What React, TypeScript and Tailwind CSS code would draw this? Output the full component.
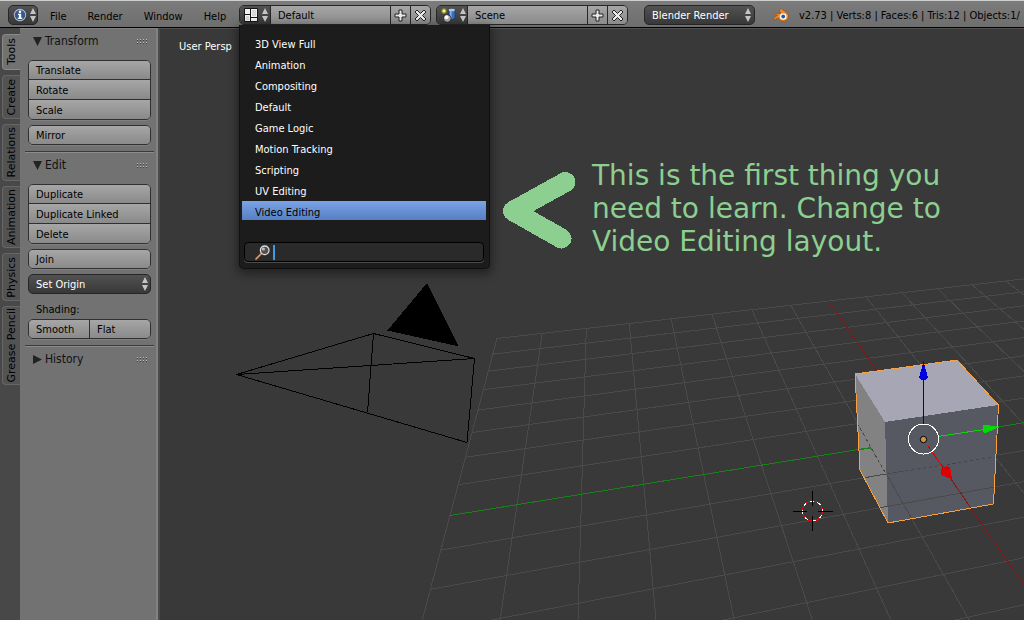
import { useState, type ReactNode } from "react";

const LAYOUTS = [
  "3D View Full",
  "Animation",
  "Compositing",
  "Default",
  "Game Logic",
  "Motion Tracking",
  "Scripting",
  "UV Editing",
  "Video Editing",
];

const TABS = [
  { name: "Tools", height: "h-[36px]" },
  { name: "Create", height: "h-[44px]" },
  { name: "Relations", height: "h-[57px]" },
  { name: "Animation", height: "h-[62px]" },
  { name: "Physics", height: "h-[48px]" },
  { name: "Grease Pencil", height: "h-[79px]" },
];

const LIGHT = "bg-linear-to-b from-[#a6a6a6] to-[#8a8a8a] text-black";
const DARK = "bg-linear-to-b from-[#525252] to-[#383838] text-white";

type Point = [number, number];

/* Ground plane: (u, v) run from 0 to 16, with the world origin at (8, 8). */
function project(u: number, v: number): Point {
  const s = u / 8;
  const t = v / 8;
  const w = 1 + 0.10495 * s - 0.32048 * t;
  return [(497 + 418.67 * s - 191.22 * t) / w, (338.5 - 5.91 * s + 11.79 * t) / w];
}

function Segment({ from, to, stroke }: { from: Point; to: Point; stroke: string }) {
  return <line x1={from[0]} y1={from[1]} x2={to[0]} y2={to[1]} stroke={stroke} />;
}

function GroundLines() {
  const steps = Array.from({ length: 17 }, (_, i) => i).filter((i) => i !== 8);
  return (
    <g>
      {steps.map((i) => (
        <Segment key={`u${i}`} from={project(i, 0)} to={project(i, 16)} stroke="#4a4a4a" />
      ))}
      {steps.map((i) => (
        <Segment key={`v${i}`} from={project(0, i)} to={project(16, i)} stroke="#4a4a4a" />
      ))}
      <Segment from={project(0, 8)} to={project(16, 8)} stroke="#178217" />
      <Segment from={project(8, 0)} to={project(8, 16)} stroke="#821717" />
    </g>
  );
}

function Scene() {
  return (
    <svg
      className="absolute inset-0 h-full w-full"
      viewBox="160 29 864 591"
      preserveAspectRatio="xMinYMin slice"
      shapeRendering="crispEdges"
      fill="none"
      aria-hidden="true"
    >
      <defs>
        <clipPath id="in-front">
          <path d="M857 423L886 474L997 457V530H857Z" />
        </clipPath>
      </defs>
      <GroundLines />

      <path d="M427 283L387.500 330.500L459 346.500Z" fill="#000" />
      <path
        d="M236.500 374.500L373.500 333.500L474.500 358.500L467 442.500L236.500 374.500L474.500 358.500M373.500 333.500L367.500 412.500"
        stroke="#000"
      />

      <path d="M855 374L957 360L998 405L885 422Z" fill="#a7a6b5" />
      <path d="M855 374L885 422L888 523L860 470Z" fill="#828282" />
      <path d="M885 422L998 405L993 504L888 523Z" fill="#575962" />
      <path d="M860 449.500L871 448" stroke="#178217" />
      <path d="M857 423L886 474L995 457" stroke="#454648" strokeDasharray="3 3" />
      <g clipPath="url(#in-front)">
        <GroundLines />
      </g>
      <path
        d="M855 374L957 360L998.500 405L993.500 504L888 523L860 470Z"
        stroke="#f9a03c"
        strokeLinejoin="round"
      />

      <path d="M923.500 425V376" stroke="#0000a8" />
      <path d="M923.500 361L928 378Q923.500 382 919 378Z" fill="#0000dc" />
      <path d="M938 436.500L984 429.500" stroke="#00dc00" />
      <path d="M1000 427L983 424.500Q982 430 984.500 433.500Z" fill="#00dc00" />
      <path d="M928 446L942 466" stroke="#dc0000" />
      <path d="M952 479.500L950 467Q945 465 941 469L941 475Z" fill="#dc0000" />
      <circle cx="923.500" cy="439" r="15" stroke="#fff" />
      <circle
        cx="923.500"
        cy="439.500"
        r="3.200"
        fill="#d0924a"
        stroke="#000"
        shapeRendering="geometricPrecision"
      />

      <circle cx="812.500" cy="511" r="10" stroke="#fff" />
      <circle cx="812.500" cy="511" r="10" stroke="#f00" strokeDasharray="4 4" />
      <path d="M793 511.500H807M818 511.500H833M812.500 491V506M812.500 516V531" stroke="#000" />

      <path
        d="M565.500 182L513 211L561.500 238.500"
        stroke="#8ccf90"
        strokeWidth="20"
        strokeLinecap="round"
        strokeLinejoin="round"
      />
    </svg>
  );
}

function Arrows() {
  return (
    <svg viewBox="0 0 6 14" className="h-[14px] w-[6px] shrink-0" fill="#c4c4c4" aria-hidden="true">
      <path d="M3 0L6 6H0ZM0 8H6L3 14Z" />
    </svg>
  );
}

function InfoIcon() {
  return (
    <svg viewBox="0 0 14 14" className="size-[14px]" aria-hidden="true">
      <circle cx="7" cy="7" r="6.400" fill="#d9e2ee" stroke="#1c2c46" strokeWidth=".6" />
      <circle cx="7" cy="7" r="5.300" fill="#35598f" />
      <circle cx="7" cy="3.700" r="1.300" fill="#fff" />
      <path d="M5 5.700H8.200V9.700H9.300V11H4.800V9.700H5.900V7H5Z" fill="#fff" />
    </svg>
  );
}

function LayoutIcon() {
  return (
    <svg viewBox="0 0 14 14" className="size-[14px]" aria-hidden="true">
      <rect width="14" height="14" rx="1" fill="#151515" />
      <path d="M1 1H6V6H1ZM1 7H6V13H1ZM7 1H13V9H7ZM7 10H13V13H7Z" fill="#f2f2f2" />
      <path d="M2 8H5V12H2ZM8 2H12V8H8Z" fill="#d8d8d8" />
    </svg>
  );
}

function SceneIcon() {
  return (
    <svg viewBox="0 0 15 15" className="size-[15px]" aria-hidden="true">
      <circle cx="3" cy="3" r="3" fill="#77772c" />
      <circle cx="3" cy="3" r="1.700" fill="#f5f58a" />
      <path d="M7.500 2V10.500Q10.500 12.500 14 10.500V2Z" fill="#3a6fc0" stroke="#17305c" strokeWidth=".6" />
      <path d="M9 3V11H10.500V3Z" fill="#8db6ee" />
      <ellipse cx="10.750" cy="2" rx="3.200" ry="1.300" fill="#a9c9f5" />
      <circle cx="6.300" cy="10.500" r="3.800" fill="#aaa" stroke="#151515" strokeWidth=".7" />
      <circle cx="5.500" cy="9.300" r="2" fill="#fff" />
    </svg>
  );
}

function PlusIcon() {
  return (
    <svg viewBox="0 0 13 13" className="size-[13px]" aria-hidden="true">
      <path d="M5 1H8V5H12V8H8V12H5V8H1V5H5Z" fill="#e8e8e8" stroke="#222" />
    </svg>
  );
}

function CloseIcon() {
  return (
    <svg viewBox="0 0 13 13" className="size-[13px]" aria-hidden="true">
      <path
        d="M3 1L6.500 4.500L10 1L12 3L8.500 6.500L12 10L10 12L6.500 8.500L3 12L1 10L4.500 6.500L1 3Z"
        fill="#e8e8e8"
        stroke="#222"
      />
    </svg>
  );
}

function BlenderIcon() {
  return (
    <svg viewBox="0 0 16 14" className="h-[14px] w-[16px] shrink-0" aria-hidden="true">
      <path
        d="M7.300 .9Q8 .3 8.800 .9L14.200 5.200Q16 7 15.500 9.300Q14.300 13.300 10.200 13.300Q6.300 13.200 5.200 9.700L2.200 11.600Q.7 12 .5 10.600L4.700 7H2Q1.200 6.200 2.200 5.400H8.200L6.600 3.500Q6.500 2 7.300 .9Z"
        fill="#ee8a27"
        stroke="#8a4508"
        strokeWidth=".5"
      />
      <circle cx="10.200" cy="8.500" r="3.300" fill="#fff" />
      <circle cx="10.200" cy="8.500" r="1.900" fill="#27579b" />
    </svg>
  );
}

function SearchIcon() {
  return (
    <svg viewBox="0 0 15 15" className="size-[15px] shrink-0" aria-hidden="true">
      <path d="M1 14L6.500 8.500" stroke="#6b3a1c" strokeWidth="2.600" strokeLinecap="round" />
      <path d="M1 14L6 9" stroke="#e0a070" strokeWidth="1.400" strokeLinecap="round" />
      <circle cx="9.700" cy="5.300" r="4.300" fill="#55504e" stroke="#ddd" strokeWidth="1.300" />
      <circle cx="8.400" cy="4" r="1.600" fill="#bbb" />
    </svg>
  );
}

function DataSelector({
  label,
  value,
  icon,
  onOpen,
  children,
}: {
  label: string;
  value: string;
  icon: ReactNode;
  onOpen?: () => void;
  children?: ReactNode;
}) {
  return (
    <div className="relative shrink-0">
      <div className="flex h-[20px] overflow-hidden rounded-[5px] border border-[#262626]">
        <button
          type="button"
          aria-label={`Browse ${label}`}
          onClick={onOpen}
          className={`flex w-[30px] items-center gap-[4px] pl-[4px] ${DARK}`}
        >
          {icon}
          <Arrows />
        </button>
        <input
          aria-label={label}
          defaultValue={value}
          className={`w-[120px] border-l border-[#262626] pl-[7px] pt-[2px] outline-none ${LIGHT}`}
        />
        <button
          type="button"
          aria-label={`Add ${label}`}
          className={`flex w-[20px] items-center justify-center border-l border-[#262626] ${LIGHT}`}
        >
          <PlusIcon />
        </button>
        <button
          type="button"
          aria-label={`Remove ${label}`}
          className={`flex w-[20px] items-center justify-center border-l border-[#262626] ${LIGHT}`}
        >
          <CloseIcon />
        </button>
      </div>
      {children}
    </div>
  );
}

function LayoutMenu() {
  return (
    <div className="absolute left-0 top-full z-20 w-[251px] rounded-b-[5px] border border-t-0 border-[#101010] bg-[#1c1c1c] pb-[6px] pl-[2px] pr-[3px] pt-[8px] shadow-[0_3px_10px_2px_rgba(0,0,0,0.4)]">
      <ul className="flex flex-col gap-[2px]">
        {LAYOUTS.map((name) => (
          <li key={name}>
            <button
              type="button"
              className={`flex h-[19px] w-full items-center pl-[13px] pt-[4px] ${
                name === "Video Editing"
                  ? "bg-linear-to-b from-[#7ba3e8] to-[#5680c2] text-black"
                  : "text-white"
              }`}
            >
              {name}
            </button>
          </li>
        ))}
      </ul>
      <label className="mx-[2px] mt-[22px] flex h-[20px] items-center gap-[3px] rounded-[4px] border border-black bg-[#2a2a2a] pl-[10px] shadow-[0_1px_0_#4a4a4a]">
        <SearchIcon />
        <span className="h-[15px] w-[2px] shrink-0 bg-[#3d9ae6]" />
        <input aria-label="Search layouts" className="min-w-0 flex-1 bg-transparent text-white outline-none" />
      </label>
    </div>
  );
}

function Header() {
  const [open, setOpen] = useState(true);
  return (
    <header className="relative z-10 flex shrink-0 items-start border-b border-t border-b-black border-t-[#cdd0cf] bg-linear-to-b from-[#7c7c7c] to-[#6e6e6e] pb-[2px] pl-[8px] pt-[4px]">
      <button
        type="button"
        aria-label="Editor type"
        className={`flex h-[20px] w-[30px] shrink-0 items-center gap-[3px] rounded-[5px] border border-[#262626] pl-[4px] ${DARK}`}
      >
        <InfoIcon />
        <Arrows />
      </button>
      <nav className="ml-[12px] flex h-[20px] w-[189px] shrink-0 items-center gap-[21px] pt-[3px]">
        <button type="button">File</button>
        <button type="button">Render</button>
        <button type="button">Window</button>
        <button type="button">Help</button>
      </nav>
      <div className="flex shrink-0 gap-[5px]">
        <DataSelector
          label="Screen layout"
          value="Default"
          icon={<LayoutIcon />}
          onOpen={() => setOpen(!open)}
        >
          {open && <LayoutMenu />}
        </DataSelector>
        <DataSelector label="Scene" value="Scene" icon={<SceneIcon />} />
      </div>
      <button
        type="button"
        className={`ml-[16px] flex h-[20px] w-[111px] shrink-0 items-center justify-between rounded-[5px] border border-[#262626] pl-[7px] pr-[3px] ${DARK}`}
      >
        <span className="pt-[2px]">Blender Render</span>
        <Arrows />
      </button>
      <div className="ml-[18px] flex h-[20px] min-w-0 flex-1 items-center gap-[10px] overflow-hidden whitespace-nowrap">
        <BlenderIcon />
        <span className="pt-[2px]">v2.73 | Verts:8 | Faces:6 | Tris:12 | Objects:1/</span>
      </div>
    </header>
  );
}

function TabStrip() {
  return (
    <div role="tablist" className="flex w-[20px] shrink-0 flex-col gap-[5px] bg-[#484848] pl-[2px] pt-[6px]">
      {TABS.map((tab, i) => (
        <button
          key={tab.name}
          type="button"
          role="tab"
          aria-selected={i === 0}
          className={`flex shrink-0 items-center justify-center rounded-l-[4px] border border-r-0 ${tab.height} ${
            i === 0 ? "border-[#8a8a8a] bg-[#727272]" : "border-[#666] bg-[#535353]"
          }`}
        >
          <span className="rotate-180 whitespace-nowrap font-['DejaVu_Sans',sans-serif] [writing-mode:vertical-rl]">
            {tab.name}
          </span>
        </button>
      ))}
    </div>
  );
}

function PanelTitle({ title, closed }: { title: string; closed?: boolean }) {
  return (
    <h2 className="flex h-[24px] items-center pl-[5px] pr-[3px] text-[12px] text-[#111]">
      <svg viewBox="0 0 9 9" className="mr-[3px] size-[9px]" fill="#222" aria-hidden="true">
        <path d={closed ? "M0 0L9 4.500L0 9Z" : "M0 0H9L4.500 9Z"} />
      </svg>
      {title}
      <svg viewBox="0 0 11 5" className="ml-auto h-[5px] w-[11px]" shapeRendering="crispEdges" aria-hidden="true">
        <path d="M0 .5H11M0 3.500H11" stroke="#c0c0c0" strokeDasharray="1 2" />
        <path d="M0 1.500H11M0 4.500H11" stroke="#404040" strokeDasharray="1 2" />
      </svg>
    </h2>
  );
}

function ButtonStack({ names }: { names: string[] }) {
  return (
    <div className="flex flex-col overflow-hidden rounded-[5px] border border-[#303030] shadow-[0_1px_0_#808080]">
      {names.map((name, i) => (
        <button
          key={name}
          type="button"
          className={`pl-[7px] pt-[2px] text-left ${LIGHT} ${
            i === 0 ? "h-[18px]" : "h-[20px] border-t border-[#303030]"
          }`}
        >
          {name}
        </button>
      ))}
    </div>
  );
}

function Divider() {
  return <hr className="-mx-[3px] border-b border-t border-b-[#8c8c8c] border-t-[#3a3a3a]" />;
}

function ToolShelf() {
  return (
    <aside className="flex w-[160px] shrink-0 border-r-2 border-r-[#4b4b4b]">
      <TabStrip />
      <div className="flex flex-1 flex-col border-r-2 border-t border-r-[#828282] border-t-[#828282] bg-[#727272] pl-[8px] pr-[5px]">
        <PanelTitle title="Transform" />
        <div className="mb-[6px] mt-[7px] flex flex-col gap-[5px]">
          <ButtonStack names={["Translate", "Rotate", "Scale"]} />
          <ButtonStack names={["Mirror"]} />
        </div>
        <Divider />
        <PanelTitle title="Edit" />
        <div className="mb-[6px] mt-[7px] flex flex-col gap-[5px]">
          <ButtonStack names={["Duplicate", "Duplicate Linked", "Delete"]} />
          <ButtonStack names={["Join"]} />
          <button
            type="button"
            className={`flex h-[20px] items-center justify-between rounded-[5px] border border-[#262626] pl-[7px] pr-[2px] ${DARK}`}
          >
            <span className="pt-[2px]">Set Origin</span>
            <Arrows />
          </button>
          <div>
            <div className="flex h-[20px] items-center pl-[8px] pt-[2px]">Shading:</div>
            <div className="flex h-[20px] overflow-hidden rounded-[5px] border border-[#303030] shadow-[0_1px_0_#808080]">
              <button type="button" className={`flex-1 pl-[7px] pt-[2px] text-left ${LIGHT}`}>
                Smooth
              </button>
              <button
                type="button"
                className={`flex-1 border-l border-[#303030] pl-[7px] pt-[2px] text-left ${LIGHT}`}
              >
                Flat
              </button>
            </div>
          </div>
        </div>
        <Divider />
        <PanelTitle title="History" closed />
      </div>
    </aside>
  );
}

export default function App() {
  return (
    <div className="flex h-screen flex-col overflow-hidden bg-[#393939] font-['DejaVu_Sans_Condensed','DejaVu_Sans',sans-serif] text-[11px] leading-[14px] text-black">
      <Header />
      <div className="flex min-h-0 flex-1">
        <ToolShelf />
        <main className="relative min-w-0 flex-1 overflow-hidden border-t border-[#505050]">
          <Scene />
          <span className="absolute left-[19px] top-[11px] text-white">User Persp</span>
          <p className="absolute left-[432px] top-[130px] w-[380px] font-['DejaVu_Sans',sans-serif] text-[28px] leading-[33px] text-[#8ccf90]">
            This is the first thing you need to learn. Change to Video Editing layout.
          </p>
        </main>
      </div>
    </div>
  );
}
